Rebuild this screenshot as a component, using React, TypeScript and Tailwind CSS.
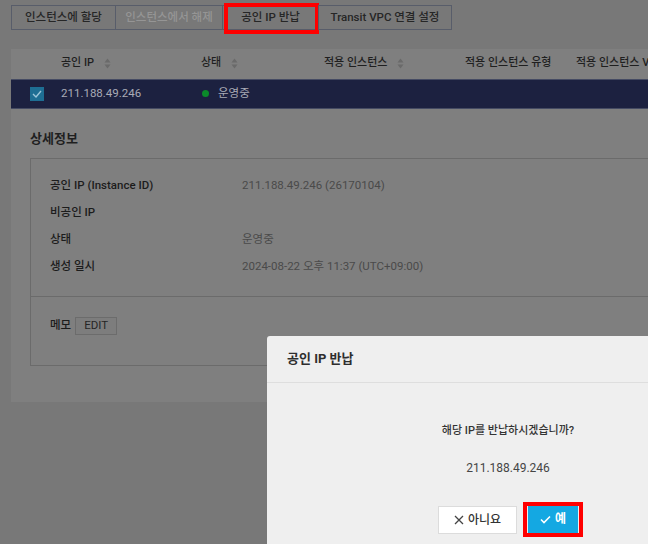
import { ReactNode } from "react";

const font = { fontFamily: "Roboto, 'Noto Sans CJK KR', 'Noto Sans', sans-serif" };

function SortIcon() {
  return (
    <svg width="7" height="11" viewBox="0 0 7 11" className="ml-[10px] shrink-0">
      <path d="M3.5 0.5 L6.5 4.5 L0.5 4.5 Z" fill="#6a6a6a" />
      <path d="M3.5 10.5 L6.5 6.5 L0.5 6.5 Z" fill="#6a6a6a" />
    </svg>
  );
}

function HeadCell({ w, sort, children }: { w: string; sort?: boolean; children: ReactNode }) {
  return (
    <div className={`flex items-center shrink-0 ${w}`}>
      <span className="whitespace-nowrap">{children}</span>
      {sort && <SortIcon />}
    </div>
  );
}

function ToolbarButton({ children, disabled, highlight, w }: { children: ReactNode; disabled?: boolean; highlight?: boolean; w: string }) {
  return (
    <div
      className={`relative h-[25px] flex items-center justify-center border border-[#585d6a] -ml-px first:ml-0 text-[11.5px] font-medium whitespace-nowrap ${w} ${
        disabled ? "text-[#959595]" : "text-[#262626]"
      }`}
    >
      {children}
      {highlight && <span className="absolute left-[1px] right-[-1px] top-[-3px] bottom-[-5px] border-[4px] border-[#ff0000]" />}
    </div>
  );
}

const details = [
  { label: "공인 IP (Instance ID)", value: "211.188.49.246 (26170104)" },
  { label: "비공인 IP", value: "" },
  { label: "상태", value: "운영중" },
  { label: "생성 일시", value: "2024-08-22 오후 11:37 (UTC+09:00)" },
];

export default function App() {
  return (
    <div className="relative w-[648px] h-[544px] overflow-hidden bg-[#787878]" style={font}>
      {/* toolbar */}
      <div className="flex pl-[11px] pt-[5px]">
        <ToolbarButton w="w-[105px]">인스턴스에 할당</ToolbarButton>
        <ToolbarButton w="w-[108px]" disabled>
          인스턴스에서 해제
        </ToolbarButton>
        <ToolbarButton w="w-[97px]" highlight>
          공인 IP 반납
        </ToolbarButton>
        <ToolbarButton w="w-[134px]">Transit VPC 연결 설정</ToolbarButton>
      </div>

      {/* card */}
      <div className="ml-[11px] mt-[19px] w-[700px] h-[353px] bg-[#7f7f7f]">
        <div className="flex items-center h-[30px] pb-[1px] text-[11px] font-medium text-[#1f1f1f]">
          <div className="w-[50px] shrink-0" />
          <HeadCell w="w-[140px]" sort>
            공인 IP
          </HeadCell>
          <HeadCell w="w-[123px]" sort>
            상태
          </HeadCell>
          <HeadCell w="w-[141px]" sort>
            적용 인스턴스
          </HeadCell>
          <HeadCell w="w-[111px]">적용 인스턴스 유형</HeadCell>
          <HeadCell w="w-[120px]">적용 인스턴스 VPC</HeadCell>
        </div>
        <div className="flex items-center h-[30px] pb-[1px] bg-[#1c2140] border-y border-[#454b63] text-[11.5px] text-[#a9abb6]">
          <div className="w-[50px] shrink-0 pl-[19px]">
            <div className="w-[14px] h-[14px] bg-[#1e6e93] flex items-center justify-center">
              <svg width="10" height="8" viewBox="0 0 10 8">
                <path d="M1 4 L4 7 L9 1" stroke="#9cc6da" strokeWidth="1.4" fill="none" />
              </svg>
            </div>
          </div>
          <div className="w-[140px] shrink-0">211.188.49.246</div>
          <div className="w-[123px] shrink-0 flex items-center">
            <span className="w-[7px] h-[7px] rounded-full bg-[#0b8a2a] ml-[1px] mr-[9px]" />
            운영중
          </div>
        </div>

        <div className="px-[19px]">
          <div className="h-[49px] pt-[11px] flex items-center text-[13px] font-bold text-[#1f1f1f]">상세정보</div>
          <div className="border border-[#6b6b6b] h-[208px]">
            <div className="pt-[18px] px-[19px] h-[138px] border-b border-[#6b6b6b] flex flex-col gap-[10px] text-[11.5px]">
              {details.map((d) => (
                <div key={d.label} className="flex items-center h-[17px]">
                  <div className="w-[192px] font-medium text-[#1c1c1c]">{d.label}</div>
                  <div className="text-[#4a4a4a]">{d.value}</div>
                </div>
              ))}
            </div>
            <div className="flex items-center px-[19px] pt-[20px] text-[11.5px]">
              <span className="font-medium text-[#1c1c1c] mr-[4px]">메모</span>
              <span className="h-[18px] px-[8px] flex items-center border border-[#6c6c6c] bg-[#7d7d7d] text-[#262626]">EDIT</span>
            </div>
          </div>
        </div>
      </div>

      {/* dialog */}
      <div className="absolute left-[267px] top-[336px] w-[482px] h-[240px] bg-[#efefef] rounded-tl-[3px]">
        <div className="h-[47px] flex items-center pl-[20px] border-b border-[#dedede] text-[13px] font-bold text-[#2e2e2e]">
          공인 IP 반납
        </div>
        <div className="flex flex-col items-center text-[12px]">
          <div className="mt-[40px] text-[11px] font-medium text-[#333]">해당 IP를 반납하시겠습니까?</div>
          <div className="mt-[19px] text-[#454545]">211.188.49.246</div>
          <div className="flex mt-[29px] gap-[11px]">
            <div className="w-[79px] h-[28px] bg-white border border-[#dcdcdc] flex items-center justify-center gap-[4px] text-[#333] font-medium">
              <svg width="10" height="10" viewBox="0 0 10 10">
                <path d="M1 1 L9 9 M9 1 L1 9" stroke="#444" strokeWidth="1.3" />
              </svg>
              아니요
            </div>
            <div className="relative w-[50px] h-[27px] bg-[#14a8e2] flex items-center justify-center gap-[4px] text-white font-bold">
              <svg width="11" height="9" viewBox="0 0 11 9">
                <path d="M1 4.5 L4 7.5 L10 1.5" stroke="white" strokeWidth="1.6" fill="none" />
              </svg>
              예
              <span className="absolute -left-[5px] -right-[5px] -top-[4px] -bottom-[4px] border-[4px] border-[#ff0000]" />
            </div>
          </div>
        </div>
      </div>
    </div>
  );
}
